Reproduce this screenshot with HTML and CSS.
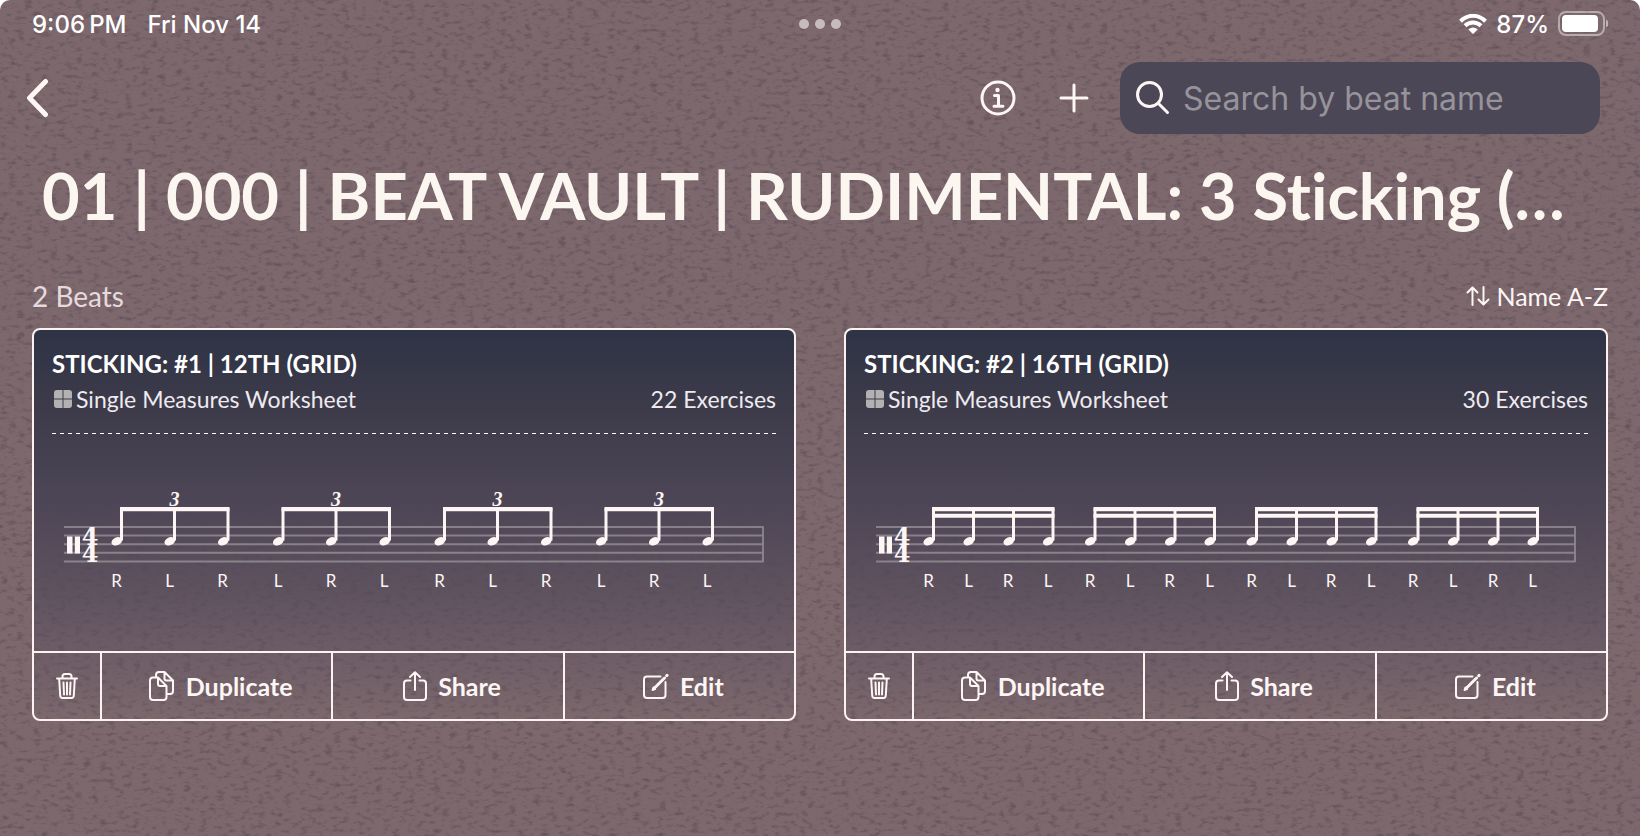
FILE: index.html
```html
<!DOCTYPE html>
<html lang="en">
<head>
    <meta charset="UTF-8">
    <meta name="viewport" content="width=device-width, initial-scale=1.0">
    <title>Beat Vault</title>
    <link rel="stylesheet" href="styles.css">
</head>
<body>
    <!-- Shared shapes -->
    <svg class="shapes" aria-hidden="true">
        <defs>
            <filter id="grain" x="0" y="0" width="100%" height="100%" color-interpolation-filters="sRGB">
                <feTurbulence type="fractalNoise" baseFrequency="0.12 0.24" numOctaves="3" seed="4"/>
                <feColorMatrix values="0 0 0 0 0.3  0 0 0 0 0.24  0 0 0 0 0.28  1.3 0 0 0 -0.66"/>
            </filter>
            <symbol id="trash" viewBox="0 0 22 26">
                <path d="M1 5.500h20M6.500 5V3.500Q6.500 1 9 1h4q2.500 0 2.500 2.500V5M3.200 6l1 16.500Q4.400 25 6.500 25h9q2.100 0 2.300-2.500L18.800 6M7.500 9.500l.5 12M11 9.500v12M14.500 9.500l-.5 12"/>
            </symbol>
            <symbol id="copy" viewBox="0 0 26 30">
                <path d="M7 6V4q0-3 3-3h5.500L24 9.500V20q0 3-3 3h-3M15.500 1v6.500q0 2 2 2H24M4 6.500h5L17.500 15v11q0 3-3 3H4q-3 0-3-3V9.500q0-3 3-3zM9 6.500V13q0 2 2 2h6.500"/>
            </symbol>
            <symbol id="share" viewBox="0 0 24 30">
                <path d="M7.500 9.500H4q-3 0-3 3V26q0 3 3 3h16q3 0 3-3V12.500q0-3-3-3h-3.500M12 19V1.500M7 6l5-4.800L17 6"/>
            </symbol>
            <symbol id="edit" viewBox="0 0 26 26">
                <path d="M17.500 3.500H4q-3 0-3 3V22q0 3 3 3h15.500q3 0 3-3V9"/>
                <path d="M11 15.500L21.500 5M23.700 2.700l.3-.3" stroke-width="3"/>
                <path d="M9.500 17l1-2.500 1.500 1.500z"/>
            </symbol>
            <symbol id="grid" viewBox="0 0 18 18">
                <path d="M8.500 0v8.500H0V3q0-3 3-3zM9.500 0H15q3 0 3 3v5.500H9.500zM0 9.500h8.500V18H3q-3 0-3-3zM9.500 9.500H18V15q0 3-3 3H9.500z"/>
            </symbol>

            <!-- Staff with percussion clef and 4/4 -->
            <g id="staff">
                <path class="staff-line" d="M0 40h699M0 48.600h699M0 57.200h699M0 65.800h699M0 74.400h699M699 39.200v36"/>
                <path d="M3 49.500h5.500v17H3zM10.800 49.500h5.200v17h-5.200z"/>
                <text class="time" x="26" y="58">4</text>
                <text class="time" x="26" y="75">4</text>
            </g>
            <g id="note">
                <ellipse cx="-4.700" cy="54.300" rx="5.600" ry="3.900" transform="rotate(-24 -4.700 54.300)"/>
                <path d="M-1.500 20h3v33.500h-3z"/>
            </g>
            <g id="triplet">
                <path d="M-1.500 22q0-2 2-2H106q2 0 2 2v2.300H-1.500z"/>
                <use href="#note"/>
                <use href="#note" x="53"/>
                <use href="#note" x="106.500"/>
                <text class="tuplet" x="53" y="19">3</text>
            </g>
            <g id="sixteenths">
                <path d="M-1.500 22q0-2 2-2H119q2 0 2 2v2.300H-1.500zM-1.500 26.700H121v4H-1.500z"/>
                <use href="#note"/>
                <use href="#note" x="40"/>
                <use href="#note" x="80"/>
                <use href="#note" x="119.500"/>
            </g>
        </defs>
    </svg>

    <div class="screen">
        <svg class="grain" aria-hidden="true"><rect width="100%" height="100%" filter="url(#grain)"/></svg>

        <!-- Status bar -->
        <div class="status-bar">
            <div class="status-left"><span>9:06&thinsp;PM</span><span>Fri Nov 14</span></div>
            <div class="dots"><i></i><i></i><i></i></div>
            <div class="status-right">
                <svg width="28" height="20" viewBox="0 0 28 20" aria-hidden="true">
                    <path class="arc" d="M1.500 7.200Q7 1.800 14 1.800T26.500 7.200M6 11.700q3.500-3.200 8-3.200t8 3.200"/>
                    <path class="fill" d="M9.300 15.500q4.700-4 9.400 0L14 20z"/>
                </svg>
                <span>87%</span>
                <svg width="50" height="26" viewBox="0 0 50 26" aria-hidden="true">
                    <rect class="shell" x="1" y="1" width="45" height="23" rx="7"/>
                    <rect class="fill" x="4" y="4" width="36" height="17" rx="4"/>
                    <path class="nub" d="M48 8.500q2.500 1.200 2.500 4t-2.500 4z"/>
                </svg>
            </div>
        </div>

        <!-- Toolbar -->
        <header class="toolbar">
            <button class="icon-button back" aria-label="Back">
                <svg width="24" height="40" viewBox="0 0 24 40"><path d="M21.500 3.500L5.500 20l16 16.500"/></svg>
            </button>
            <button class="icon-button" aria-label="Info">
                <svg width="36" height="36" viewBox="0 0 36 36">
                    <circle cx="18" cy="18" r="16"/>
                    <circle class="fill" cx="17.500" cy="10" r="2.200"/>
                    <path d="M14.500 15.500H18.500V26M14 26.200h9"/>
                </svg>
            </button>
            <button class="icon-button" aria-label="Add beat">
                <svg width="36" height="36" viewBox="0 0 36 36"><path d="M18 5v26M5 18h26"/></svg>
            </button>
            <div class="search">
                <svg width="36" height="36" viewBox="0 0 36 36" aria-hidden="true">
                    <circle cx="14.500" cy="14.500" r="12"/>
                    <path d="M23.500 23.500l9 9"/>
                </svg>
                <input type="search" aria-label="Search by beat name" placeholder="Search by beat name">
            </div>
        </header>

        <h1>01 | 000 | BEAT VAULT | RUDIMENTAL: 3 Sticking (…</h1>

        <div class="list-header">
            <span class="count">2 Beats</span>
            <button class="sort">
                <svg width="24" height="20" viewBox="0 0 24 20" aria-hidden="true">
                    <path d="M6.500 19V1.500M1.500 6.500l5-5 5 5M17.500 1v17.500M12.500 13.500l5 5 5-5"/>
                </svg>
                Name A-Z
            </button>
        </div>

        <!-- Beats -->
        <main class="beats">
            <article class="beat">
                <div class="beat-body">
                    <h2>STICKING: #1 | 12TH (GRID)</h2>
                    <div class="meta">
                        <svg class="grid-icon" aria-hidden="true"><use href="#grid"/></svg>
                        <span>Single Measures Worksheet</span>
                        <span class="exercises">22 Exercises</span>
                    </div>
                    <svg class="notation" viewBox="0 0 700 106" role="img" aria-label="Twelve triplet eighth notes in 4/4">
                        <use href="#staff"/>
                        <use href="#triplet" x="57.500"/>
                        <use href="#triplet" x="219"/>
                        <use href="#triplet" x="380.500"/>
                        <use href="#triplet" x="542"/>
                        <g class="sticking">
                            <text x="52.500" y="100">R</text><text x="105.500" y="100">L</text><text x="158.500" y="100">R</text>
                            <text x="214" y="100">L</text><text x="267" y="100">R</text><text x="320" y="100">L</text>
                            <text x="375.500" y="100">R</text><text x="428.500" y="100">L</text><text x="482" y="100">R</text>
                            <text x="537" y="100">L</text><text x="590" y="100">R</text><text x="643" y="100">L</text>
                        </g>
                    </svg>
                </div>
                <div class="actions">
                    <button class="delete" aria-label="Delete"><svg width="22" height="26"><use href="#trash"/></svg></button>
                    <button><svg width="26" height="30"><use href="#copy"/></svg>Duplicate</button>
                    <button><svg width="24" height="30"><use href="#share"/></svg>Share</button>
                    <button><svg width="26" height="26"><use href="#edit"/></svg>Edit</button>
                </div>
            </article>

            <article class="beat">
                <div class="beat-body">
                    <h2>STICKING: #2 | 16TH (GRID)</h2>
                    <div class="meta">
                        <svg class="grid-icon" aria-hidden="true"><use href="#grid"/></svg>
                        <span>Single Measures Worksheet</span>
                        <span class="exercises">30 Exercises</span>
                    </div>
                    <svg class="notation" viewBox="0 0 700 106" role="img" aria-label="Sixteen sixteenth notes in 4/4">
                        <use href="#staff"/>
                        <use href="#sixteenths" x="57.500"/>
                        <use href="#sixteenths" x="219"/>
                        <use href="#sixteenths" x="380.500"/>
                        <use href="#sixteenths" x="542"/>
                        <g class="sticking">
                            <text x="52.500" y="100">R</text><text x="92.500" y="100">L</text><text x="132" y="100">R</text><text x="172" y="100">L</text>
                            <text x="214" y="100">R</text><text x="254" y="100">L</text><text x="293.500" y="100">R</text><text x="333.500" y="100">L</text>
                            <text x="375.500" y="100">R</text><text x="415.500" y="100">L</text><text x="455" y="100">R</text><text x="495" y="100">L</text>
                            <text x="537" y="100">R</text><text x="577" y="100">L</text><text x="617" y="100">R</text><text x="656.500" y="100">L</text>
                        </g>
                    </svg>
                </div>
                <div class="actions">
                    <button class="delete" aria-label="Delete"><svg width="22" height="26"><use href="#trash"/></svg></button>
                    <button><svg width="26" height="30"><use href="#copy"/></svg>Duplicate</button>
                    <button><svg width="24" height="30"><use href="#share"/></svg>Share</button>
                    <button><svg width="26" height="26"><use href="#edit"/></svg>Edit</button>
                </div>
            </article>
        </main>
    </div>
</body>
</html>
```
FILE: styles.css
```css
/* General styling */
* {
    box-sizing: border-box;
}

body {
    margin: 0;
    background-color: #fff;
    color: #fdf6f4;
    font-family: Lato, sans-serif;
}

button {
    padding: 0;
    border: none;
    background: none;
    color: inherit;
    font: inherit;
    cursor: pointer;
}

svg {
    flex: none;
    fill: none;
    stroke: currentColor;
    stroke-width: 2;
    stroke-linecap: round;
    stroke-linejoin: round;
}

.fill {
    fill: currentColor;
    stroke: none;
}

.shapes {
    position: absolute;
    width: 0;
    height: 0;
}

.screen {
    position: relative;
    isolation: isolate;
    min-height: 100vh;
    padding: 0 32px;
    overflow: hidden;
    background-color: #7c686d;
    border-radius: 10px 10px 0 0;
}

/* Paper texture */
.grain {
    position: absolute;
    z-index: -1;
    inset: 0;
    width: 100%;
    height: 100%;
    stroke: none;
}

/* Status bar */
.status-bar {
    display: grid;
    grid-template-columns: 1fr auto 1fr;
    align-items: center;
    height: 48px;
    color: #fff;
    font-family: Inter, sans-serif;
    font-size: 24px;
    font-weight: 500;
}

.status-left,
.status-right {
    display: flex;
    align-items: center;
    gap: 21px;
}

.status-right {
    justify-content: flex-end;
    gap: 9px;
}

.arc {
    stroke-width: 4;
    stroke-linecap: butt;
}

.shell {
    opacity: 0.45;
}

.nub {
    fill: currentColor;
    stroke: none;
    opacity: 0.5;
}

.dots {
    display: flex;
    gap: 6px;
}

.dots i {
    width: 10px;
    height: 10px;
    border-radius: 50%;
    background-color: #c6bcbf;
}

/* Toolbar */
.toolbar {
    display: flex;
    align-items: center;
    gap: 40px;
    margin: 14px 8px 0 -8px;
}

.icon-button {
    display: flex;
}

.icon-button svg {
    stroke-width: 3;
}

.back {
    margin-right: auto;
}

.back svg {
    stroke-width: 5;
}

.search {
    display: flex;
    align-items: center;
    gap: 12px;
    width: 480px;
    height: 72px;
    margin-left: -12px;
    padding: 0 15px;
    background-color: #4b4756;
    border-radius: 20px;
}

.search svg {
    stroke-width: 3;
}

.search input {
    flex: 1;
    min-width: 0;
    padding: 0;
    border: none;
    outline: none;
    background: none;
    color: #fff;
    font-family: Inter, sans-serif;
    font-size: 32px;
}

.search input::placeholder {
    color: #97939a;
}

h1 {
    margin: 18px 12px 0 10px;
    overflow: hidden;
    color: #fcf6f0;
    font-size: 65px;
    font-variant-ligatures: none;
    font-weight: 700;
    line-height: 86px;
    white-space: nowrap;
    text-overflow: ellipsis;
}

.list-header {
    display: flex;
    align-items: center;
    justify-content: space-between;
    height: 36px;
    margin: 40px 0 14px;
}

.count {
    color: #e6dadd;
    font-size: 28px;
}

.sort {
    display: flex;
    align-items: center;
    gap: 6px;
    font-size: 25px;
}

/* Beat cards */
.beats {
    display: grid;
    grid-template-columns: 1fr 1fr;
    gap: 48px;
}

.beat {
    overflow: hidden;
    border: 2px solid #fdf2f2;
    border-radius: 8px;
    background-image: linear-gradient(#2e3345, #3d3b4a 20%, #4d4656 45%, rgba(84, 74, 90, 0.7) 68%, rgba(90, 78, 94, 0.4) 84%, rgba(124, 104, 109, 0));
}

.beat-body {
    padding: 18px 18px 0;
}

.beat h2 {
    margin: 0;
    color: #fff;
    font-size: 24px;
    font-weight: 700;
    line-height: 32px;
}

.meta {
    display: flex;
    align-items: center;
    gap: 4px;
    height: 54px;
    padding-bottom: 16px;
    background: repeating-linear-gradient(90deg, #fff 0 4px, transparent 4px 8px) bottom / 100% 1px no-repeat;
    font-size: 23px;
    color: #eeeaf0;
}

.grid-icon {
    width: 18px;
    height: 18px;
    margin-left: 2px;
    fill: #b3b1b1;
    stroke: none;
}

.exercises {
    margin-left: auto;
}

.notation {
    display: block;
    width: calc(100% - 24px);
    margin: 53px auto 58px;
    fill: currentColor;
    stroke: none;
}

.staff-line {
    fill: none;
    stroke: rgba(255, 255, 255, 0.3);
    stroke-linecap: butt;
    stroke-width: 2;
}

.time {
    font-family: "DejaVu Serif", serif;
    font-size: 24px;
    font-weight: 700;
    text-anchor: middle;
}

.tuplet {
    font-family: "Liberation Serif", serif;
    font-size: 20px;
    font-style: italic;
    font-weight: 700;
    text-anchor: middle;
}

.sticking {
    font-size: 17px;
    text-anchor: middle;
}

.actions {
    display: flex;
    height: 68px;
    border-top: 2px solid #fdf2f2;
}

.actions button {
    display: flex;
    flex: 1;
    align-items: center;
    justify-content: center;
    gap: 11px;
    padding-left: 8px;
    border-left: 2px solid #fdf2f2;
    font-size: 25px;
    font-weight: 700;
}

.actions .delete {
    flex: 0 0 66px;
    padding-left: 0;
    border-left: none;
}

@media (max-width: 1000px) {
    .beats {
        grid-template-columns: 1fr;
    }
}
```
